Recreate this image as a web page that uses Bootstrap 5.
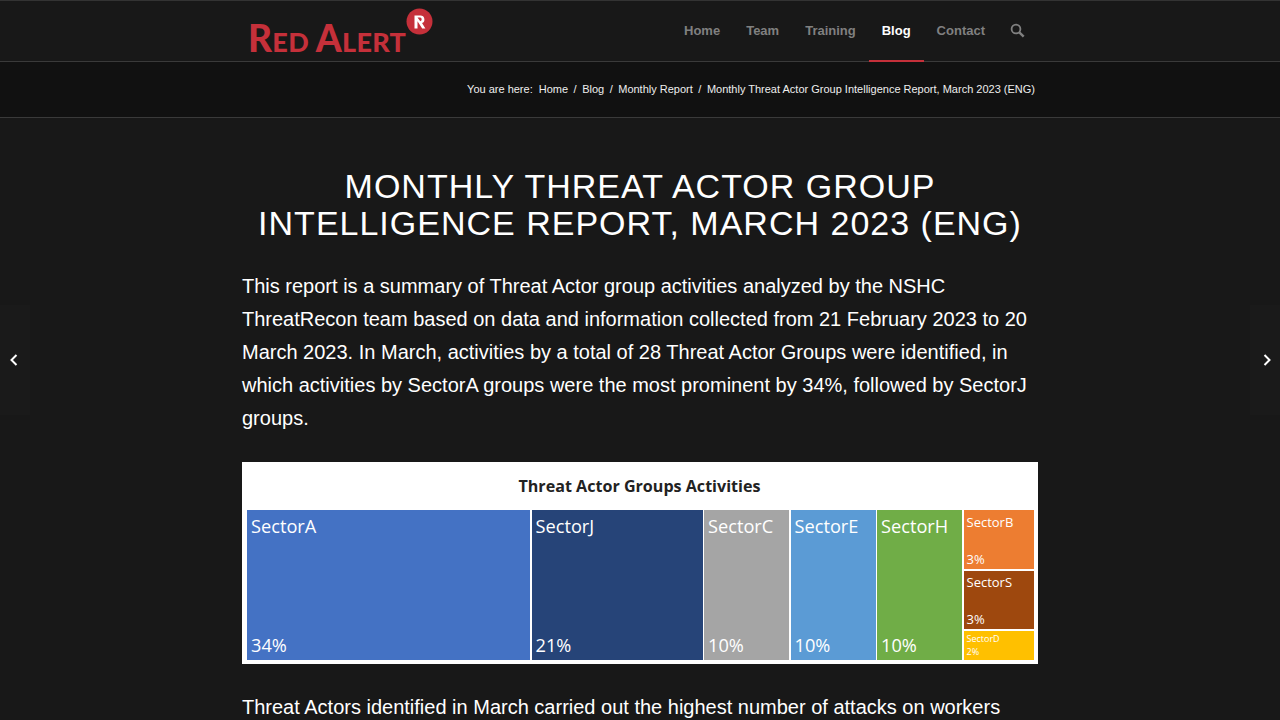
<!DOCTYPE html>
<html lang="en">

<head>
  <meta charset="UTF-8">
  <title>Monthly Threat Actor Group Intelligence Report, March 2023 (ENG)</title>
  <link href="https://cdn.jsdelivr.net/npm/bootstrap@5.3.2/dist/css/bootstrap.min.css" rel="stylesheet">
  <style>
    html, body { height: 720px; overflow: hidden; }
    body { background: #181818; font-family: "Liberation Sans", Arial, sans-serif; color: #fff; }

    .site-wrap { width: 796px; margin: 0 auto; }

    .top-bar { height: 62px; background: #181818; border-top: 1px solid #333; border-bottom: 1px solid #3a3a3a; }
    .logo-box { position: relative; width: 192px; height: 60px; margin-left: 6px; }
    .logo-word { position: absolute; left: 0; top: 16px; font-family: Lato, sans-serif; font-weight: 900; font-size: 27px; line-height: 42px; color: #c5303a; white-space: nowrap; letter-spacing: .3px; }
    .logo-word b { font-weight: 900; font-size: 37px; }
    .logo-mark { position: absolute; left: 158px; top: 7px; width: 27px; height: 27px; }

    .main-menu { height: 60px; }
    .main-menu a { display: block; height: 61px; line-height: 59px; padding: 0 13px; font-size: 13px; font-weight: 700; color: #808080; text-decoration: none; }
    .main-menu a.on { color: #fff; border-bottom: 2px solid #c5303a; }
    .search-ico { width: 15px; height: 15px; margin: 0 13px 2px 12px; }

    .crumb-bar { height: 56px; background: #111; border-bottom: 1px solid #3a3a3a; font-size: 11px; color: #eee; }
    .crumb-bar .site-wrap { padding-right: 3px; }
    .crumb-lead { margin-right: 6px; }
    .crumb-sep { margin: 0 5.5px; }

    .post-title { font-size: 34px; line-height: 37px; letter-spacing: 1px; font-weight: 400; text-transform: uppercase; text-align: center; margin: 50px 0 0; color: #fff; }
    .post-text { font-size: 20px; line-height: 33px; margin: 28px 0 0; color: #fff; }
    .post-next { margin-top: 27px; }

    .chart-box { height: 202px; margin-top: 27px; background: #fff; padding: 9px 3px 4px 5px; font-family: "Open Sans", sans-serif; }
    .chart-name { height: 39px; line-height: 30px; font-size: 16.1px; font-weight: 700; color: #222; text-align: center; margin-right: 3px; }
    .tree-row { height: 150px; gap: 1.5px; }
    .tree-cell { color: #fff; padding: 3px 4px 1px; font-size: 18.2px; line-height: 27px; height: 100%; }
    .tree-cell.small-cell { font-size: 13px; line-height: 20px; padding: 2px 3px 0; }
    .tree-cell.tiny-cell { font-size: 9px; line-height: 11px; padding: 2px 3px 3px; }
    .c-a { width: 283px; background: #4472c4; }
    .c-j { width: 171px; background: #264478; }
    .c-c { width: 85px; background: #a5a5a5; }
    .c-e { width: 85px; background: #5b9bd5; }
    .c-h { width: 85px; background: #70ad47; }
    .c-rest { width: 70px; gap: 2px; }
    .tree-cell.c-b { height: 59px; background: #ed7d31; }
    .tree-cell.c-s { height: 58px; background: #9e480e; padding-top: 1px; }
    .tree-cell.c-d { height: 29px; background: #ffc000; }

    .side-arrow { position: absolute; top: 305px; width: 30px; height: 110px; background: #1a1a1a; }
    .side-arrow svg { width: 8px; height: 12px; }
    .side-prev { left: 0; }
    .side-prev svg { margin-right: 3px; }
    .side-next { right: 0; }
    .side-next svg { margin-left: 3px; }
  </style>
</head>

<body>

  <header class="top-bar">
    <div class="site-wrap d-flex justify-content-between">
      <div class="logo-box">
        <div class="logo-word"><b>R</b>ED <b>A</b>LERT</div>
        <svg class="logo-mark" viewBox="0 0 27 27">
          <circle cx="13.5" cy="13.5" r="13" fill="#c5303a"/>
          <path d="M8.5 20.5V7.5h6a3.9 3.9 0 0 1 1.5 7.5l3.4 5.5h-3.2l-4.7-7.2v7.2z" fill="#fff"/>
          <path d="M11.5 9.6h2.6a1.9 1.9 0 0 1 .2 3.7z" fill="#c5303a"/>
        </svg>
      </div>
      <nav class="main-menu d-flex align-items-center">
        <a href="#">Home</a>
        <a href="#">Team</a>
        <a href="#">Training</a>
        <a href="#" class="on">Blog</a>
        <a href="#">Contact</a>
        <svg class="search-ico" viewBox="0 0 15 15" fill="none" stroke="#808080">
          <circle cx="6" cy="6" r="4.4" stroke-width="1.8"/>
          <path d="M9.3 9.3l4.4 4.4" stroke-width="2.4"/>
        </svg>
      </nav>
    </div>
  </header>

  <div class="crumb-bar">
    <div class="site-wrap h-100 d-flex align-items-center justify-content-end">
      <span class="crumb-lead">You are here:</span>
      <span>Home</span><span class="crumb-sep">/</span>
      <span>Blog</span><span class="crumb-sep">/</span>
      <span>Monthly Report</span><span class="crumb-sep">/</span>
      <span>Monthly Threat Actor Group Intelligence Report, March 2023 (ENG)</span>
    </div>
  </div>

  <main class="site-wrap">
    <h1 class="post-title">Monthly Threat Actor Group<br>Intelligence Report, March 2023 (ENG)</h1>

    <p class="post-text">This report is a summary of Threat Actor group activities analyzed by the NSHC ThreatRecon team based on data and information collected from 21 February 2023 to 20 March 2023. In March, activities by a total of 28 Threat Actor Groups were identified, in which activities by SectorA groups were the most prominent by 34%, followed by SectorJ groups.</p>

    <div class="chart-box">
      <div class="chart-name">Threat Actor Groups Activities</div>
      <div class="tree-row d-flex">
        <div class="tree-cell c-a d-flex flex-column justify-content-between"><span>SectorA</span><span>34%</span></div>
        <div class="tree-cell c-j d-flex flex-column justify-content-between"><span>SectorJ</span><span>21%</span></div>
        <div class="tree-cell c-c d-flex flex-column justify-content-between"><span>SectorC</span><span>10%</span></div>
        <div class="tree-cell c-e d-flex flex-column justify-content-between"><span>SectorE</span><span>10%</span></div>
        <div class="tree-cell c-h d-flex flex-column justify-content-between"><span>SectorH</span><span>10%</span></div>
        <div class="c-rest d-flex flex-column">
          <div class="tree-cell small-cell c-b w-100 d-flex flex-column justify-content-between"><span>SectorB</span><span>3%</span></div>
          <div class="tree-cell small-cell c-s w-100 d-flex flex-column justify-content-between"><span>SectorS</span><span>3%</span></div>
          <div class="tree-cell tiny-cell c-d w-100 d-flex flex-column justify-content-between"><span>SectorD</span><span>2%</span></div>
        </div>
      </div>
    </div>

    <p class="post-text post-next">Threat Actors identified in March carried out the highest number of attacks on workers</p>
  </main>

  <a href="#" class="side-arrow side-prev d-flex align-items-center justify-content-center">
    <svg viewBox="0 0 8 12" fill="none" stroke="#fff" stroke-width="2"><path d="M6.5 1L1.5 6l5 5"/></svg>
  </a>
  <a href="#" class="side-arrow side-next d-flex align-items-center justify-content-center">
    <svg viewBox="0 0 8 12" fill="none" stroke="#fff" stroke-width="2"><path d="M1.5 1l5 5-5 5"/></svg>
  </a>

  <script src="https://cdn.jsdelivr.net/npm/bootstrap@5.3.2/dist/js/bootstrap.bundle.min.js"></script>
</body>

</html>
